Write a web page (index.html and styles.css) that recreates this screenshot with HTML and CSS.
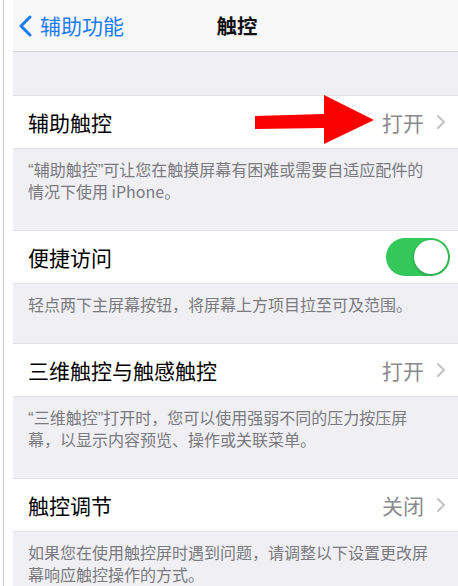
FILE: index.html
```html
<!DOCTYPE html>
<html lang="zh-CN">
<head>
<meta charset="utf-8">
<title>触控</title>
<link rel="stylesheet" href="styles.css">
</head>
<body>
<div class="page">
  <div class="gutter"></div>
  <div class="panel">
    <header class="nav">
      <a class="back">
        <svg class="back-icon" width="14" height="22" viewBox="0 0 14 22"><polyline points="12,2 3,11 12,20" fill="none" stroke="#1a7cf2" stroke-width="3" stroke-linecap="round" stroke-linejoin="round"/></svg>
        <span>辅助功能</span>
      </a>
      <h1 class="title">触控</h1>
      <span></span>
    </header>
    <div class="gap"></div>

    <div class="row row-marked">
      <span class="label">辅助触控</span>
      <span class="value">打开</span>
      <svg class="chev" width="10" height="16" viewBox="0 0 10 16"><polyline points="2,2 8,8 2,14" fill="none" stroke="#c4c4c8" stroke-width="2" stroke-linecap="round" stroke-linejoin="round"/></svg>
      <svg class="arrow" width="120" height="50" viewBox="0 0 120 50"><polygon points="0,21 69,19 69,0 119,25 69,49 69,33 0,34" fill="#fb0000"/></svg>
    </div>
    <p class="footer"><span class="q">“</span>辅助触控<span class="q">”</span>可让您在触摸屏幕有困难或需要自适应配件的<br>情况下使用 iPhone。</p>

    <div class="row">
      <span class="label">便捷访问</span>
      <span class="toggle"><span class="knob"></span></span>
    </div>
    <p class="footer">轻点两下主屏幕按钮，将屏幕上方项目拉至可及范围。</p>

    <div class="row">
      <span class="label">三维触控与触感触控</span>
      <span class="value">打开</span>
      <svg class="chev" width="10" height="16" viewBox="0 0 10 16"><polyline points="2,2 8,8 2,14" fill="none" stroke="#c4c4c8" stroke-width="2" stroke-linecap="round" stroke-linejoin="round"/></svg>
    </div>
    <p class="footer"><span class="q">“</span>三维触控<span class="q">”</span>打开时，您可以使用强弱不同的压力按压屏<br>幕，以显示内容预览、操作或关联菜单。</p>

    <div class="row">
      <span class="label">触控调节</span>
      <span class="value">关闭</span>
      <svg class="chev" width="10" height="16" viewBox="0 0 10 16"><polyline points="2,2 8,8 2,14" fill="none" stroke="#c4c4c8" stroke-width="2" stroke-linecap="round" stroke-linejoin="round"/></svg>
    </div>
    <p class="footer">如果您在使用触控屏时遇到问题，请调整以下设置更改屏<br>幕响应触控操作的方式。</p>
  </div>
</div>
</body>
</html>
```

FILE: styles.css
```css
* { box-sizing: border-box; }
html, body {
  margin: 0;
  padding: 0;
  background: #ffffff;
  font-family: "Noto Sans CJK SC", "Noto Sans", sans-serif;
  height: 586px;
  overflow: hidden;
}
.page {
  display: flex;
  height: 586px;
}
.gutter {
  width: 10px;
  margin-left: 3px;
  border-left: 1px solid #cfcfcf;
  flex: none;
}
.panel {
  flex: 1;
  background: #efeff4;
  overflow: hidden;
}
.nav {
  height: 52px;
  background: #f8f8f8;
  border-bottom: 1px solid #d2d2d6;
  display: grid;
  grid-template-columns: 1fr auto 1fr;
  align-items: center;
  padding: 0 0 0 5px;
}
.back {
  display: flex;
  align-items: center;
  gap: 8px;
  color: #1a7cf2;
  font-size: 21px;
  line-height: 1;
}
.back-icon { flex: none; }
.title {
  margin: 0;
  font-size: 20.5px;
  font-weight: 600;
  color: #111;
  line-height: 1;
  padding-right: 2px;
}
.gap { height: 43px; }
.row {
  height: 54px;
  background: #fff;
  border-top: 1px solid #e2e2e6;
  border-bottom: 1px solid #e2e2e6;
  display: flex;
  align-items: center;
  padding: 0 12px 0 15px;
  position: relative;
}
.label {
  flex: 1;
  font-size: 21px;
  color: #000;
  line-height: 1;
}
.value {
  font-size: 21px;
  color: #8a8a8e;
  line-height: 1;
  margin-right: 12px;
}
.chev { flex: none; }
.arrow {
  position: absolute;
  left: 242px;
  top: -1px;
}
.toggle {
  width: 64px;
  height: 38px;
  border-radius: 19px;
  background: #34c759;
  display: flex;
  justify-content: flex-end;
  align-items: center;
  padding: 2px;
  margin-right: -4px;
}
.knob {
  width: 34px;
  height: 34px;
  border-radius: 50%;
  background: #fff;
  box-shadow: 0 1px 3px rgba(0,0,0,0.25);
}
.footer {
  margin: 0;
  padding: 9px 0 28px 15px;
  font-size: 16px;
  line-height: 22px;
  height: auto;
  color: #7a7a7f;
  white-space: nowrap;
}
.q {
  font-family: "Liberation Sans", sans-serif;
  font-size: 17px;
  line-height: 0;
}
```
